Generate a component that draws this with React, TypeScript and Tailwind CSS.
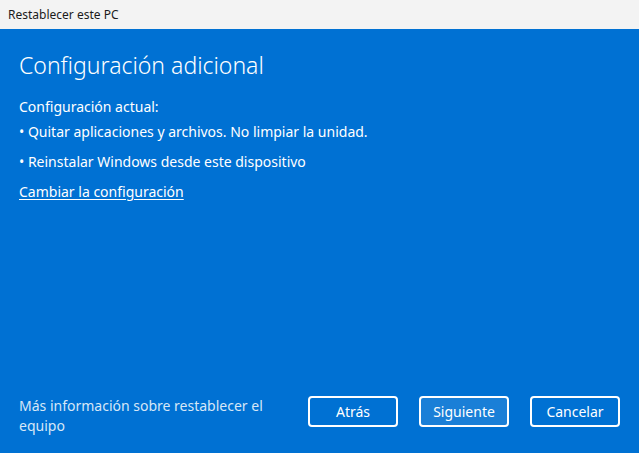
export default function App() {
  return (
    <div
      className="w-[639px] h-[453px] flex flex-col bg-[#0071d3] text-white overflow-hidden"
      style={{ fontFamily: '"Segoe UI", "Noto Sans", "Open Sans", sans-serif' }}
    >
      <div className="h-[29px] bg-[#f3f3f3] text-[#1b1b1b] text-[12px] flex items-center pl-[8px]">
        Restablecer este PC
      </div>
      <div className="flex-1 flex flex-col px-[19px]">
        <h1 className="text-[23px] font-light mt-[20px] leading-[32px]">Configuración adicional</h1>
        <p className="text-[14px] mt-[16px] leading-[20px]">Configuración actual:</p>
        <p className="text-[14px] mt-[5px] leading-[20px]">• Quitar aplicaciones y archivos. No limpiar la unidad.</p>
        <p className="text-[14px] mt-[10px] leading-[20px]">• Reinstalar Windows desde este dispositivo</p>
        <a href="#" className="text-[14px] mt-[10px] leading-[20px] underline underline-offset-2 self-start">
          Cambiar la configuración
        </a>
        <div className="flex-1" />
        <div className="flex items-start pb-[17px]">
          <p className="text-[14px] leading-[20px] text-[#d6e7f7] w-[270px]">
            Más información sobre restablecer el equipo
          </p>
          <div className="flex-1" />
          <div className="flex gap-[21px]">
            <button className="w-[90px] h-[31px] rounded-[4px] border-2 border-white text-[14px]">Atrás</button>
            <button className="w-[90px] h-[31px] rounded-[4px] border-2 border-white bg-[#1a7fd7] text-[14px]">Siguiente</button>
            <button className="w-[90px] h-[31px] rounded-[4px] border-2 border-white text-[14px]">Cancelar</button>
          </div>
        </div>
      </div>
    </div>
  );
}
